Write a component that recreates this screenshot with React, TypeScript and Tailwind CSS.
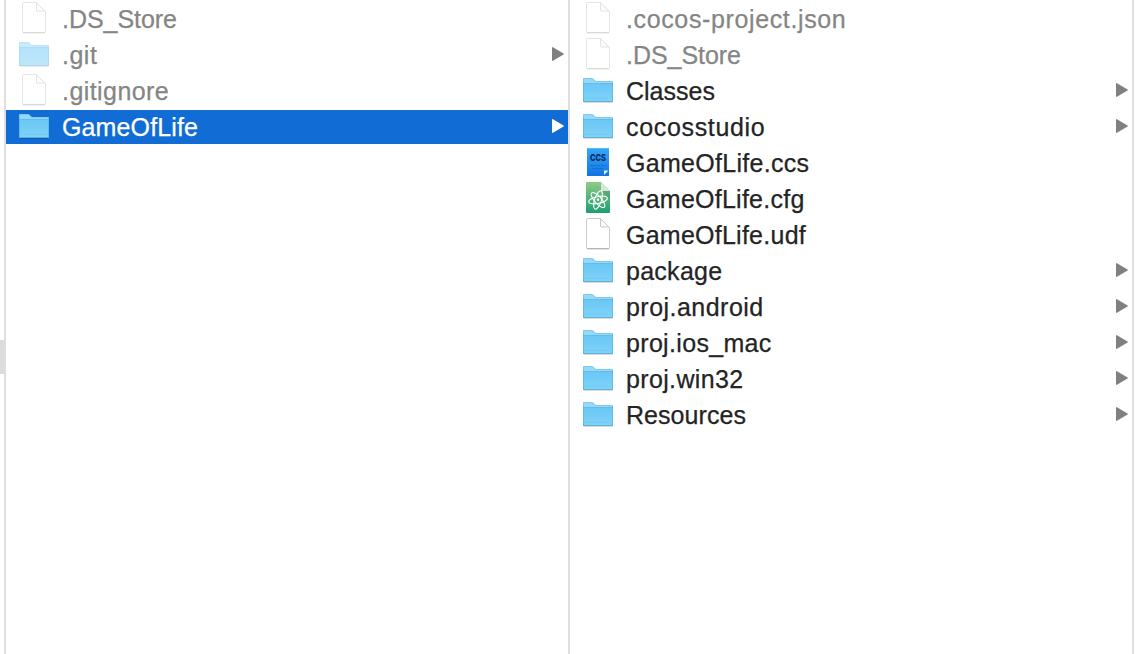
type Kind = "file" | "folder" | "ccs" | "atom";

interface Entry {
  name: string;
  kind: Kind;
  dim?: boolean;
  selected?: boolean;
  tracking: string;
}

const parentEntries: Entry[] = [
  { name: ".DS_Store", kind: "file", dim: true, tracking: "tracking-[-0.05px]" },
  { name: ".git", kind: "folder", dim: true, tracking: "tracking-[0.5px]" },
  { name: ".gitignore", kind: "file", dim: true, tracking: "tracking-[0.43px]" },
  { name: "GameOfLife", kind: "folder", selected: true, tracking: "tracking-[0.13px]" },
];

const childEntries: Entry[] = [
  { name: ".cocos-project.json", kind: "file", dim: true, tracking: "tracking-[0.63px]" },
  { name: ".DS_Store", kind: "file", dim: true, tracking: "tracking-[-0.05px]" },
  { name: "Classes", kind: "folder", tracking: "tracking-[0px]" },
  { name: "cocosstudio", kind: "folder", tracking: "tracking-[0.67px]" },
  { name: "GameOfLife.ccs", kind: "ccs", tracking: "tracking-[0.3px]" },
  { name: "GameOfLife.cfg", kind: "atom", tracking: "tracking-[0.25px]" },
  { name: "GameOfLife.udf", kind: "file", tracking: "tracking-[0.25px]" },
  { name: "package", kind: "folder", tracking: "tracking-[0.27px]" },
  { name: "proj.android", kind: "folder", tracking: "tracking-[0.47px]" },
  { name: "proj.ios_mac", kind: "folder", tracking: "tracking-[0.33px]" },
  { name: "proj.win32", kind: "folder", tracking: "tracking-[0.35px]" },
  { name: "Resources", kind: "folder", tracking: "tracking-[0.05px]" },
];

function Gradients() {
  return (
    <svg className="absolute size-0" aria-hidden="true">
      <defs>
        <linearGradient id="folder" x1="0" y1="0" x2="0" y2="1">
          <stop offset="0" stopColor="#6ac7f4" />
          <stop offset="1" stopColor="#80d3f9" />
        </linearGradient>
        <linearGradient id="ccs" x1="0" y1="0" x2="0" y2="1">
          <stop offset="0" stopColor="#35a9f8" />
          <stop offset="1" stopColor="#1173e4" />
        </linearGradient>
        <linearGradient id="atom" x1="0" y1="0" x2="0" y2="1">
          <stop offset="0" stopColor="#8fca87" />
          <stop offset="1" stopColor="#1d9f72" />
        </linearGradient>
      </defs>
    </svg>
  );
}

function FolderIcon() {
  return (
    <>
      <path d="M1.5 28.5h29" stroke="#000" strokeOpacity=".14" />
      <path d="M1 27.6V5.2Q1 4 2.2 4H10q1 0 1.6.7L13 6.3q.5.7 1.4.7H30q1 0 1 1v19.6z" fill="#93d9fb" />
      <path d="M1 9h30v19H1z" fill="url(#folder)" />
      <path d="M1 9.5h30" stroke="#5fb9e4" strokeOpacity=".7" />
      <path d="M1.5 8V4.5H10.2l2.8 3h17.5" fill="none" stroke="#74bfe6" strokeOpacity=".6" />
      <path d="M1.5 8v19M30.5 8v19" stroke="#5bb5df" strokeOpacity=".7" />
      <path d="M1 27.5h30" stroke="#58a9cf" strokeOpacity=".85" />
      <path d="M2 24.5h28" stroke="#6cc2ec" strokeOpacity=".35" />
    </>
  );
}

function FileIcon() {
  return (
    <>
      <path d="M5 31.5h22" stroke="#000" strokeOpacity=".1" />
      <path d="M4.5 1.5q0-1 1-1H18.5L27.5 9.5V29.5q0 1-1 1h-21q-1 0-1-1z" fill="#fff" stroke="#cacaca" />
      <path d="M18.5.8V8q0 1 1 1h7.5z" fill="#fcfcfc" stroke="#c8c8c8" />
      <path d="M5 30.5h22" stroke="#b4b4b4" />
    </>
  );
}

function CcsIcon() {
  return (
    <>
      <path d="M5 2h22v28H5z" fill="url(#ccs)" />
      <path d="M5 2.5h22" stroke="#56bdfa" />
      <text x="8" y="15" fontFamily="Inter, 'Open Sans', sans-serif" fontWeight="800" fontSize="9" textLength="16" lengthAdjust="spacingAndGlyphs" fill="#08285f">
        CCS
      </text>
      <path d="M8 19.5h16M11 22.5h10" stroke="#0d55b5" strokeDasharray="3 .7" strokeWidth=".7" strokeOpacity=".7" />
      <path d="M22 29v-4.500h4.500z" fill="#e4f3ff" />
      <path d="M23.500 29l3-3v3z" fill="#1a72df" />
    </>
  );
}

function AtomIcon() {
  return (
    <>
      <path d="M4 1q0-1 1-1h14l9 9v21q0 1-1 1H5q-1 0-1-1z" fill="url(#atom)" />
      <path d="M19 8l9 9V9z" fill="#2f8058" fillOpacity=".3" />
      <path d="M19 0v8q0 1 1 1h8z" fill="#d6e9d3" />
      <g fill="none" stroke="#fff" strokeWidth="1.1">
        <ellipse cx="16" cy="18" rx="9.6" ry="3.4" transform="rotate(-12 16 18)" />
        <ellipse cx="16" cy="18" rx="9.6" ry="3.4" transform="rotate(48 16 18)" />
        <ellipse cx="16" cy="18" rx="9.6" ry="3.4" transform="rotate(108 16 18)" />
      </g>
      <circle cx="16" cy="17.8" r="1.2" fill="#fff" />
    </>
  );
}

function EntryIcon({ kind, dim }: { kind: Kind; dim?: boolean }) {
  return (
    <svg viewBox="0 0 32 32" className={`size-8 shrink-0 self-start overflow-visible ${dim ? "opacity-50" : ""}`} aria-hidden="true">
      {kind === "folder" && <FolderIcon />}
      {kind === "file" && <FileIcon />}
      {kind === "ccs" && <CcsIcon />}
      {kind === "atom" && <AtomIcon />}
    </svg>
  );
}

function Row({ entry }: { entry: Entry }) {
  const color = entry.selected ? "bg-[#116cd6] text-white" : entry.dim ? "text-[#858585]" : "text-[#242424]";
  return (
    <li className={`flex h-[34px] items-center pr-1 pl-3 ${color}`}>
      <EntryIcon kind={entry.kind} dim={entry.dim} />
      <span
        className={`ml-3 flex-1 text-[25px]/[34px] whitespace-nowrap [-webkit-text-stroke:0.25px_currentColor] ${entry.tracking}`}
      >
        {entry.name}
      </span>
      {entry.kind === "folder" && (
        <svg viewBox="0 0 12 14" className={`mb-[2px] h-3.5 w-3 ${entry.selected ? "text-white" : "text-[#808080]"}`} aria-hidden="true">
          <path d="M0 .8Q0-.2 1 .2L11.5 6.4q.8.6 0 1.2L1 13.8q-1 .4-1-.6z" fill="currentColor" />
        </svg>
      )}
    </li>
  );
}

function Column({ entries }: { entries: Entry[] }) {
  return (
    <ul className="flex w-[564px] shrink-0 flex-col gap-0.5 border-r-2 border-[#dfdfdf] pt-0.5">
      {entries.map((entry) => (
        <Row key={entry.name} entry={entry} />
      ))}
    </ul>
  );
}

export default function App() {
  return (
    <main className="flex h-[654px] w-[1136px] overflow-hidden bg-white font-['Liberation_Sans',Arial,sans-serif]">
      <Gradients />
      <div className="w-1.5 shrink-0 border-r-2 border-[#dfdfdf] pt-[340px]">
        <div className="h-[34px] bg-[#dcdcdc]" />
      </div>
      <Column entries={parentEntries} />
      <Column entries={childEntries} />
    </main>
  );
}
